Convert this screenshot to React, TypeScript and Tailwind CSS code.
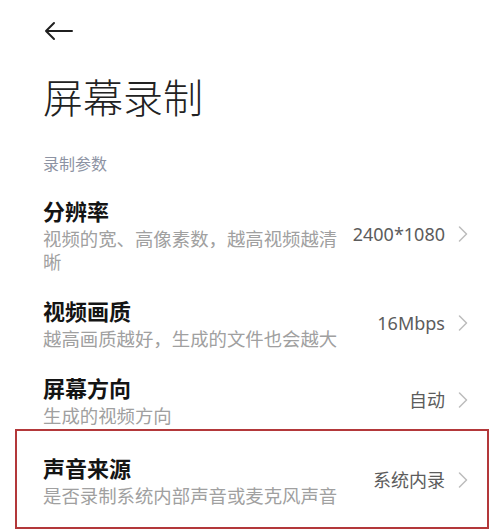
const rows = [
  { title: "分辨率", desc: "视频的宽、高像素数，越高视频越清晰", value: "2400*1080" },
  { title: "视频画质", desc: "越高画质越好，生成的文件也会越大", value: "16Mbps" },
  { title: "屏幕方向", desc: "生成的视频方向", value: "自动" },
];

const Chevron = () => (
  <svg width="10" height="16" viewBox="0 0 10 16" fill="none" className="shrink-0">
    <polyline points="1.5,1 8.5,8 1.5,15" stroke="#bcbcbc" strokeWidth="1.5" strokeLinecap="round" strokeLinejoin="round" />
  </svg>
);

const Row = ({ title, desc, value }: { title: string; desc: string; value: string }) => (
  <div className="flex items-center gap-2 pt-3 pb-[10px]">
    <div className="flex-1 min-w-0">
      <div className="text-[22px] leading-[32px] font-bold text-[#141414]">{title}</div>
      <div className="text-[18.4px] leading-[23px] text-[#a0a0a0]">{desc}</div>
    </div>
    <div className="flex items-center gap-[13px] shrink-0">
      <span className="text-[18px] leading-[24px] text-[#5c5c5c]">{value}</span>
      <Chevron />
    </div>
  </div>
);

export default function App() {
  return (
    <div
      className="w-[500px] h-[531px] overflow-hidden bg-white pl-[43px] pr-[32px]"
      style={{ fontFamily: '"Noto Sans", "Noto Sans CJK SC", sans-serif' }}
    >
      {/* Top bar */}
      <div className="h-[62px] flex items-center">
        <svg width="30" height="20" viewBox="0 0 30 20" fill="none" className="ml-[1px]">
          <path d="M28 10H2M10 2L2 10L10 18" stroke="#1f1f1f" strokeWidth="2" strokeLinecap="round" strokeLinejoin="round" />
        </svg>
      </div>

      {/* Page title */}
      <h1 className="mt-[12px] text-[40px] leading-[48px] font-light text-[#222]">屏幕录制</h1>

      {/* Section */}
      <div className="mt-[31px] text-[16px] leading-[22px] text-[#8d93a3]">录制参数</div>

      <div className="mt-[8px]">
        {rows.map((r) => (
          <Row key={r.title} {...r} />
        ))}
        <div className="-ml-[28px] -mr-[21px] -mt-[8px] pl-[26px] pr-[19px] border-2 border-[#b3383a] pt-[9px] pb-[10px]">
          <Row title="声音来源" desc="是否录制系统内部声音或麦克风声音" value="系统内录" />
        </div>
      </div>
    </div>
  );
}
